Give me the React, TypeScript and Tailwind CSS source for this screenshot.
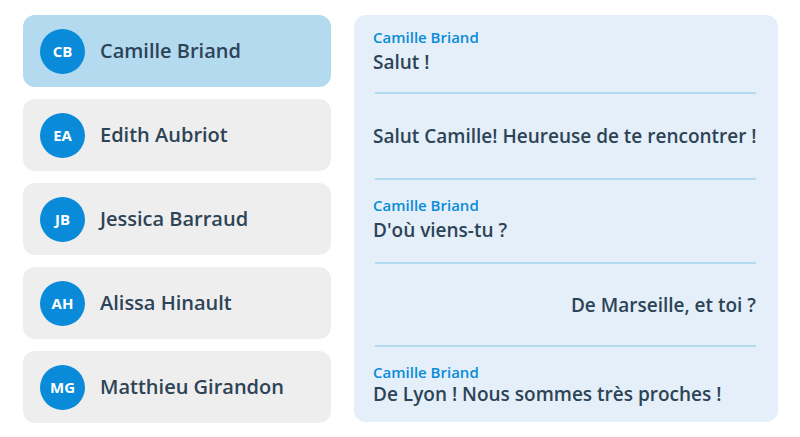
import React from "react";

const contacts = [
  { initials: "CB", name: "Camille Briand", active: true },
  { initials: "EA", name: "Edith Aubriot" },
  { initials: "JB", name: "Jessica Barraud" },
  { initials: "AH", name: "Alissa Hinault" },
  { initials: "MG", name: "Matthieu Girandon" },
];

export default function App() {
  return (
    <div
      className="w-[800px] h-[437px] bg-white flex gap-[23px] pl-[23px] pt-[15px]"
      style={{ fontFamily: '"Open Sans", "Noto Sans", sans-serif' }}
    >
      <div className="w-[308px] flex flex-col gap-[12px]">
        {contacts.map((c) => (
          <div
            key={c.initials}
            className={`h-[72px] rounded-[12px] flex items-center pl-[17px] gap-[15px] ${
              c.active ? "bg-[#b4daf0]" : "bg-[#eeeeee]"
            }`}
          >
            <div className="w-[45px] h-[45px] rounded-full bg-[#0a8bd9] text-white flex items-center justify-center text-[15px] font-bold">
              {c.initials}
            </div>
            <span className="text-[20px] font-semibold text-[#2d4356]">
              {c.name}
            </span>
          </div>
        ))}
      </div>
      <div className="w-[424px] h-[407px] rounded-[12px] bg-[#e4eff9] pl-[21px] pr-[22px] flex flex-col">
        <Msg h="h-[79px]" pad="pt-[13px]" label gap="mt-[3px]">
          Salut !
        </Msg>
        <Msg h="h-[86px]" pad="justify-center">
          Salut Camille! Heureuse de te rencontrer !
        </Msg>
        <Msg h="h-[84px]" pad="pt-[16px]" label gap="mt-[3px]">
          D'où viens-tu ?
        </Msg>
        <Msg h="h-[83px]" pad="justify-center" right>
          De Marseille, et toi ?
        </Msg>
        <Msg h="h-[75px]" pad="pt-[16px]" label last>
          De Lyon ! Nous sommes très proches !
        </Msg>
      </div>
    </div>
  );
}

function Msg({
  children,
  h,
  pad,
  label,
  right,
  last,
  gap,
}: {
  children: React.ReactNode;
  h: string;
  pad: string;
  label?: boolean;
  right?: boolean;
  last?: boolean;
  gap?: string;
}) {
  return (
    <div
      className={`${h} ${pad} flex flex-col ${
        last ? "" : "border-b-2 border-[#b4daf0]"
      } ${right ? "items-end" : "items-start"}`}
    >
      {label && (
        <div className="text-[15px] leading-[18px] font-semibold text-[#0a8bd9] -ml-[2px] whitespace-nowrap">
          Camille Briand
        </div>
      )}
      <div
        className={`text-[19px] leading-[26px] font-semibold text-[#2d4356] -ml-[2px] whitespace-nowrap ${
          gap ?? ""
        }`}
      >
        {children}
      </div>
    </div>
  );
}
